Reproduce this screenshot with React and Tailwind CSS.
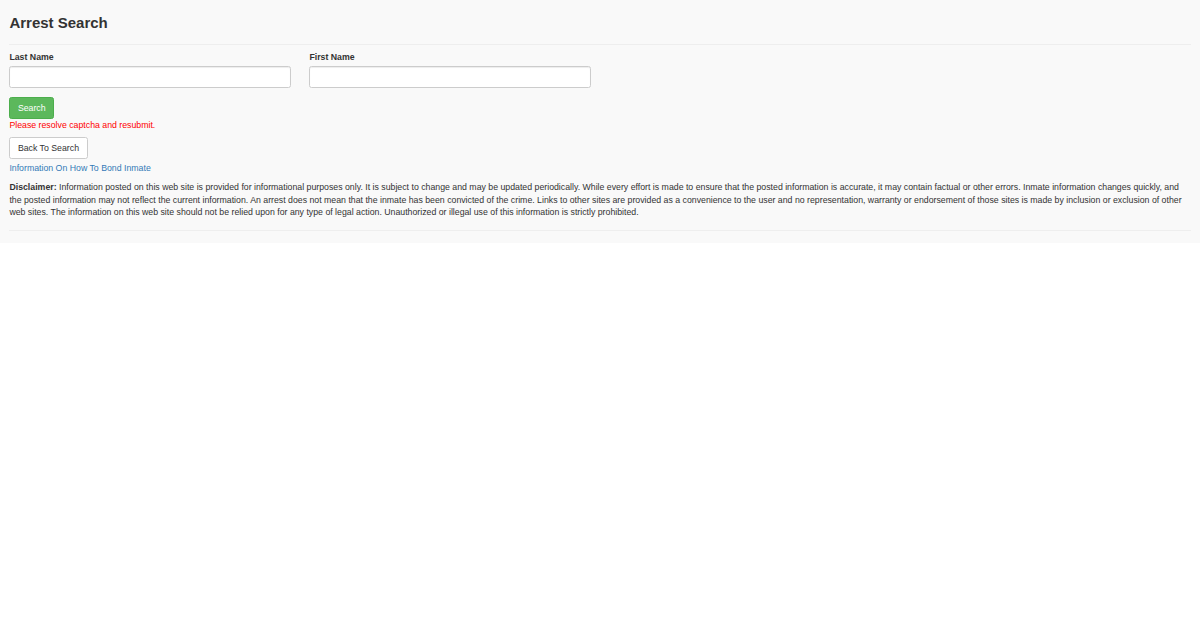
export default function App() {
  return (
    <div className="min-h-[620px] bg-white font-['Liberation_Sans',Arial,sans-serif] text-[8.75px] leading-[12.5px] text-[#333333]">
      <div className="bg-[#f9f9f9] px-[9.4px] pt-[14.6px] pb-[11.5px]">
        <h3 className="text-[15px] leading-[16.5px] font-bold">Arrest Search</h3>
        <hr className="mt-[12.9px] border-0 border-t border-[#eeeeee]" />

        <div className="mt-[6px] flex gap-[18.75px]">
          <div className="w-[281.25px]">
            <label className="block font-bold leading-[12.5px]">Last Name</label>
            <input
              type="text"
              className="mt-[3px] block h-[21.25px] w-full rounded-[2.5px] border border-[#cccccc] bg-white px-[7.5px] shadow-[inset_0_1px_1px_rgba(0,0,0,0.075)] outline-none"
            />
          </div>
          <div className="w-[281.25px]">
            <label className="block font-bold leading-[12.5px]">First Name</label>
            <input
              type="text"
              className="mt-[3px] block h-[21.25px] w-full rounded-[2.5px] border border-[#cccccc] bg-white px-[7.5px] shadow-[inset_0_1px_1px_rgba(0,0,0,0.075)] outline-none"
            />
          </div>
        </div>

        <button className="mt-[9.75px] block h-[21.25px] rounded-[2.5px] border border-[#4cae4c] bg-[#5cb85c] px-[7.5px] leading-[12.5px] text-white">
          Search
        </button>
        <div className="mb-[6.25px] text-[#ff0000]">Please resolve captcha and resubmit.</div>

        <button className="block h-[21.25px] rounded-[2.5px] border border-[#cccccc] bg-white px-[7.5px] leading-[12.5px] text-[#333333]">
          Back To Search
        </button>
        <p className="mt-[3.75px] mb-[6.25px]">
          <a href="#" className="text-[#337ab7]">Information On How To Bond Inmate</a>
        </p>

        <p>
          <b>Disclaimer:</b> Information posted on this web site is provided for informational purposes only. It is
          subject to change and may be updated periodically. While every effort is made to ensure that the posted
          information is accurate, it may contain factual or other errors. Inmate information changes quickly, and the
          posted information may not reflect the current information. An arrest does not mean that the inmate has been
          convicted of the crime. Links to other sites are provided as a convenience to the user and no representation,
          warranty or endorsement of those sites is made by inclusion or exclusion of other web sites. The information on
          this web site should not be relied upon for any type of legal action. Unauthorized or illegal use of this
          information is strictly prohibited.
        </p>
        <hr className="mt-[11.5px] border-0 border-t border-[#eeeeee]" />
      </div>
    </div>
  );
}
